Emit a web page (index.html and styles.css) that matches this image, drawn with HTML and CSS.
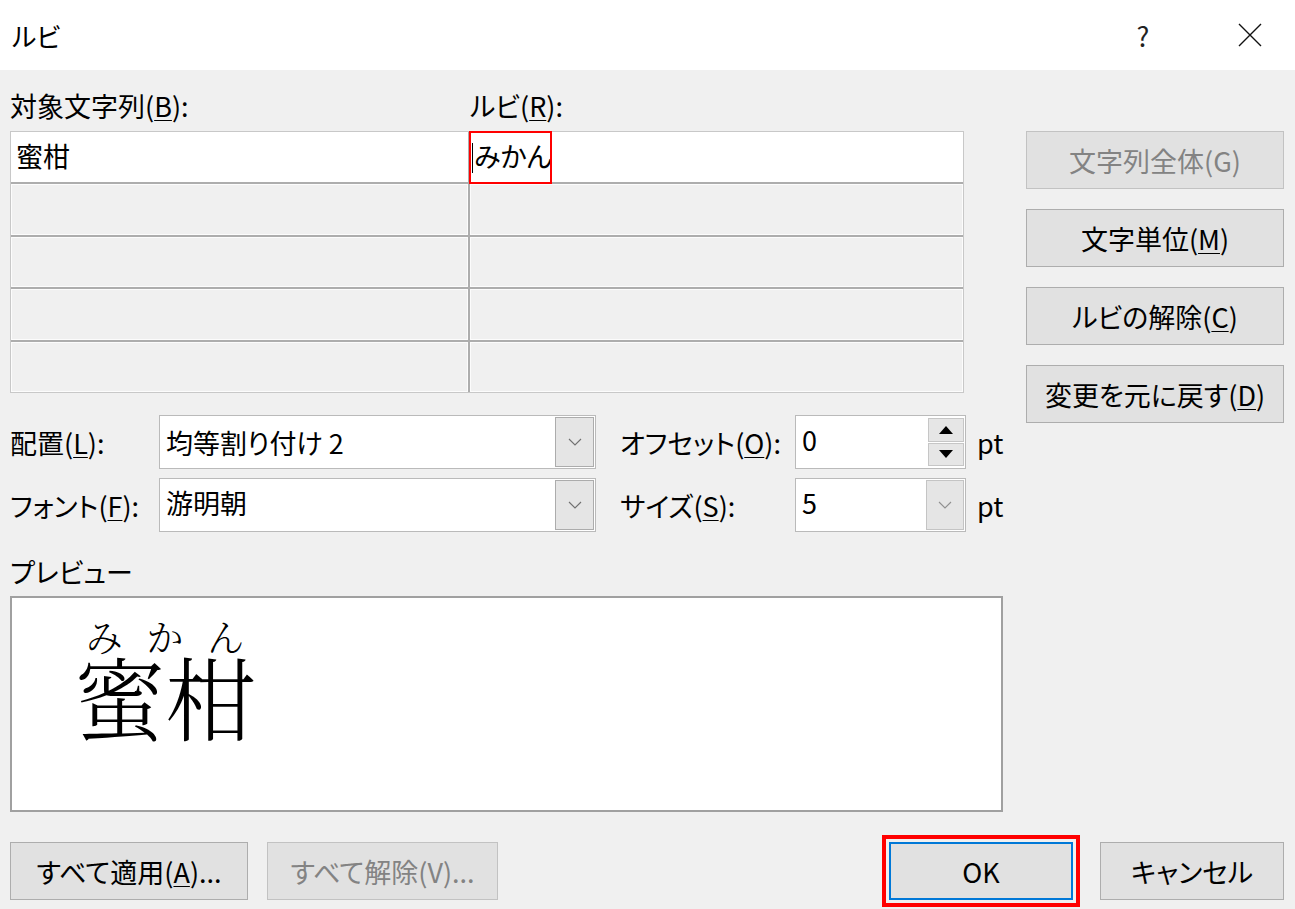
FILE: index.html
```html
<!DOCTYPE html>
<html lang="ja">
<head>
<meta charset="utf-8">
<title>ルビ</title>
<link rel="stylesheet" href="styles.css">
</head>
<body>
<div class="titlebar">
  <span class="title">ルビ</span>
  <span class="tb-btn help">?</span>
  <span class="tb-btn close"><svg width="24" height="24" viewBox="0 0 24 24"><path d="M1 1L23 23M23 1L1 23" stroke="#111" stroke-width="1.4" fill="none"/></svg></span>
</div>
<div class="content">
  <div class="top">
    <div class="left">
      <div class="col-labels">
        <span class="lbl-base">対象文字列(<u>B</u>):</span>
        <span>ルビ(<u>R</u>):</span>
      </div>
      <div class="ruby-table">
        <div class="cell filled">蜜柑</div>
        <div class="cell filled ruby-cell"><span class="caret"></span>みかん<span class="mark"></span></div>
        <div class="cell"></div><div class="cell"></div>
        <div class="cell"></div><div class="cell"></div>
        <div class="cell"></div><div class="cell"></div>
        <div class="cell"></div><div class="cell"></div>
      </div>
    </div>
    <div class="side">
      <div class="btn disabled">文字列全体(G)</div>
      <div class="btn">文字単位(<u>M</u>)</div>
      <div class="btn">ルビの解除(<u>C</u>)</div>
      <div class="btn">変更を元に戻す(<u>D</u>)</div>
    </div>
  </div>

  <div class="settings">
    <div class="set-row">
      <span class="set-label">配置(<u>L</u>):</span>
      <div class="combo">
        <span class="field-text">均等割り付け 2</span>
        <span class="drop"><svg width="14" height="8" viewBox="0 0 14 8"><path d="M1 1L7 7L13 1" stroke="#707070" stroke-width="1.1" fill="none"/></svg></span>
      </div>
      <span class="set-label2">オフセット(<u>O</u>):</span>
      <div class="spin">
        <span class="field-text top-text">0</span>
        <span class="spin-btns">
          <span><svg width="14" height="8" viewBox="0 0 14 8"><path d="M7 0L14 8H0Z" fill="#000"/></svg></span>
          <span><svg width="14" height="8" viewBox="0 0 14 8"><path d="M0 0H14L7 8Z" fill="#000"/></svg></span>
        </span>
      </div>
      <span class="unit">pt</span>
    </div>
    <div class="set-row">
      <span class="set-label">フォント(<u>F</u>):</span>
      <div class="combo">
        <span class="field-text top-text">游明朝</span>
        <span class="drop"><svg width="14" height="8" viewBox="0 0 14 8"><path d="M1 1L7 7L13 1" stroke="#707070" stroke-width="1.1" fill="none"/></svg></span>
      </div>
      <span class="set-label2">サイズ(<u>S</u>):</span>
      <div class="spin">
        <span class="field-text top-text">5</span>
        <span class="drop drop-size"><svg width="14" height="8" viewBox="0 0 14 8"><path d="M1 1L7 7L13 1" stroke="#909090" stroke-width="1.1" fill="none"/></svg></span>
      </div>
      <span class="unit">pt</span>
    </div>
  </div>

  <div class="preview-label">プレビュー</div>
  <div class="preview">
    <div class="pv-word">
      <div class="pv-ruby"><span>み</span><span>か</span><span>ん</span></div>
      <div class="pv-base">蜜柑</div>
    </div>
  </div>

  <div class="bottom">
    <div class="btn b-apply">すべて適用(<u>A</u>)...</div>
    <div class="btn disabled b-clear">すべて解除(V)...</div>
    <div class="btn b-ok">OK</div>
    <div class="btn b-cancel">キャンセル</div>
  </div>
</div>
</body>
</html>
```

FILE: styles.css
```css
html, body {
  margin: 0;
  padding: 0;
}
body {
  width: 1295px;
  height: 909px;
  overflow: hidden;
  background: #f0f0f0;
  color: #000;
  font-family: "Noto Sans CJK JP", "Noto Sans", sans-serif;
  font-size: 27px;
  font-feature-settings: "palt";
}
u {
  text-decoration-thickness: 1px;
  text-underline-offset: 3px;
}

/* title bar */
.titlebar {
  height: 70px;
  background: #fff;
  display: flex;
  align-items: center;
  padding-left: 12px;
  padding-right: 13px;
}
.title {
  flex: 1;
  font-size: 26px;
}
.tb-btn {
  width: 64px;
  display: flex;
  justify-content: center;
  align-items: center;
}
.help {
  margin-right: 43px;
  font-size: 27px;
  color: #222;
}

/* content */
.content {
  padding: 0 11px 0 10px;
}
.top {
  display: flex;
  align-items: flex-start;
  gap: 62px;
  padding-top: 21px;
}
.left {
  width: 954px;
}
.col-labels {
  display: flex;
  height: 30px;
  line-height: 30px;
  margin-bottom: 10px;
}
.lbl-base {
  width: 460px;
}
.ruby-table {
  height: 262px;
  box-sizing: border-box;
  border: 1px solid #c8c8c8;
  background: #adadad;
  display: grid;
  grid-template-columns: 457px 1fr;
  grid-template-rows: repeat(5, 1fr);
  gap: 2px;
}
.cell {
  position: relative;
  background: #f0f0f0;
  box-shadow: inset 0 0 0 1px #fcfcfc;
  display: flex;
  align-items: center;
  padding-left: 5px;
  padding-bottom: 3px;
}
.cell.filled {
  background: #fff;
  box-shadow: none;
}
.ruby-cell {
  padding-left: 2px;
}
.caret {
  width: 1px;
  height: 30px;
  background: #000;
  margin-right: 1px;
  margin-top: 4px;
}
.mark {
  position: absolute;
  left: -1px;
  top: -1px;
  width: 83px;
  height: 53px;
  box-sizing: border-box;
  border: 2px solid #ff0000;
}

.side {
  width: 258px;
  padding-top: 40px;
  margin-bottom: -30px;
  display: flex;
  flex-direction: column;
  gap: 20px;
}
.btn {
  height: 58px;
  box-sizing: border-box;
  background: #e1e1e1;
  border: 1px solid #adadad;
  display: flex;
  align-items: center;
  justify-content: center;
  white-space: nowrap;
}
.btn.disabled {
  color: #838383;
  border-color: #c2c2c2;
}

/* settings */
.settings {
  margin-top: 22px;
  display: flex;
  flex-direction: column;
  gap: 9px;
}
.set-row {
  display: flex;
  align-items: center;
  height: 54px;
}
.set-label {
  width: 149px;
}
.set-label2 {
  width: 175px;
  margin-left: 24px;
}
.combo, .spin {
  height: 54px;
  box-sizing: border-box;
  border: 1px solid #bababa;
  background: #fff;
  display: flex;
  padding: 1px;
}
.combo {
  width: 437px;
}
.spin {
  width: 171px;
}
.field-text {
  flex: 1;
  display: flex;
  align-items: center;
  padding-left: 5px;
}
.top-text {
  padding-bottom: 6px;
}
.drop {
  width: 39px;
  box-sizing: border-box;
  background: #e5e5e5;
  border: 1px solid #acacac;
  display: flex;
  align-items: center;
  justify-content: center;
}
.drop-size {
  width: 38px;
  border-color: #c4c4c4;
}
.spin-btns {
  width: 36px;
  display: flex;
  flex-direction: column;
  gap: 1px;
  padding: 1px 0;
}
.spin-btns span {
  flex: 1;
  background: #e6e6e6;
  border: 1px solid #c6c6c6;
  display: flex;
  align-items: center;
  justify-content: center;
}
.unit {
  margin-left: 11px;
}

/* preview */
.preview-label {
  margin-top: 25px;
  height: 30px;
  line-height: 30px;
}
.preview {
  margin-top: 9px;
  width: 993px;
  height: 216px;
  box-sizing: border-box;
  border: 2px solid #a0a0a0;
  background: #fff;
  padding: 21px 0 0 62px;
}
.pv-word {
  display: inline-flex;
  flex-direction: column;
  font-family: "Noto Serif CJK JP", "Noto Serif CJK SC", "Noto Sans CJK JP", serif;
  font-feature-settings: normal;
  font-weight: 300;
}
.pv-ruby {
  display: flex;
  height: 34px;
  line-height: 34px;
  font-size: 37px;
}
.pv-ruby span {
  flex: 1;
  text-align: center;
}
.pv-base {
  font-size: 91px;
  line-height: 84px;
  white-space: nowrap;
}

/* bottom buttons */
.bottom {
  margin-top: 30px;
  display: flex;
  align-items: center;
}
.b-apply {
  width: 238px;
}
.b-clear {
  width: 231px;
  margin-left: 19px;
}
.b-ok {
  width: 184px;
  margin-left: auto;
  border: 2px solid #0078d7;
  outline: 4px solid #ff0000;
  outline-offset: 3px;
}
.b-cancel {
  width: 184px;
  margin-left: 27px;
}
```
